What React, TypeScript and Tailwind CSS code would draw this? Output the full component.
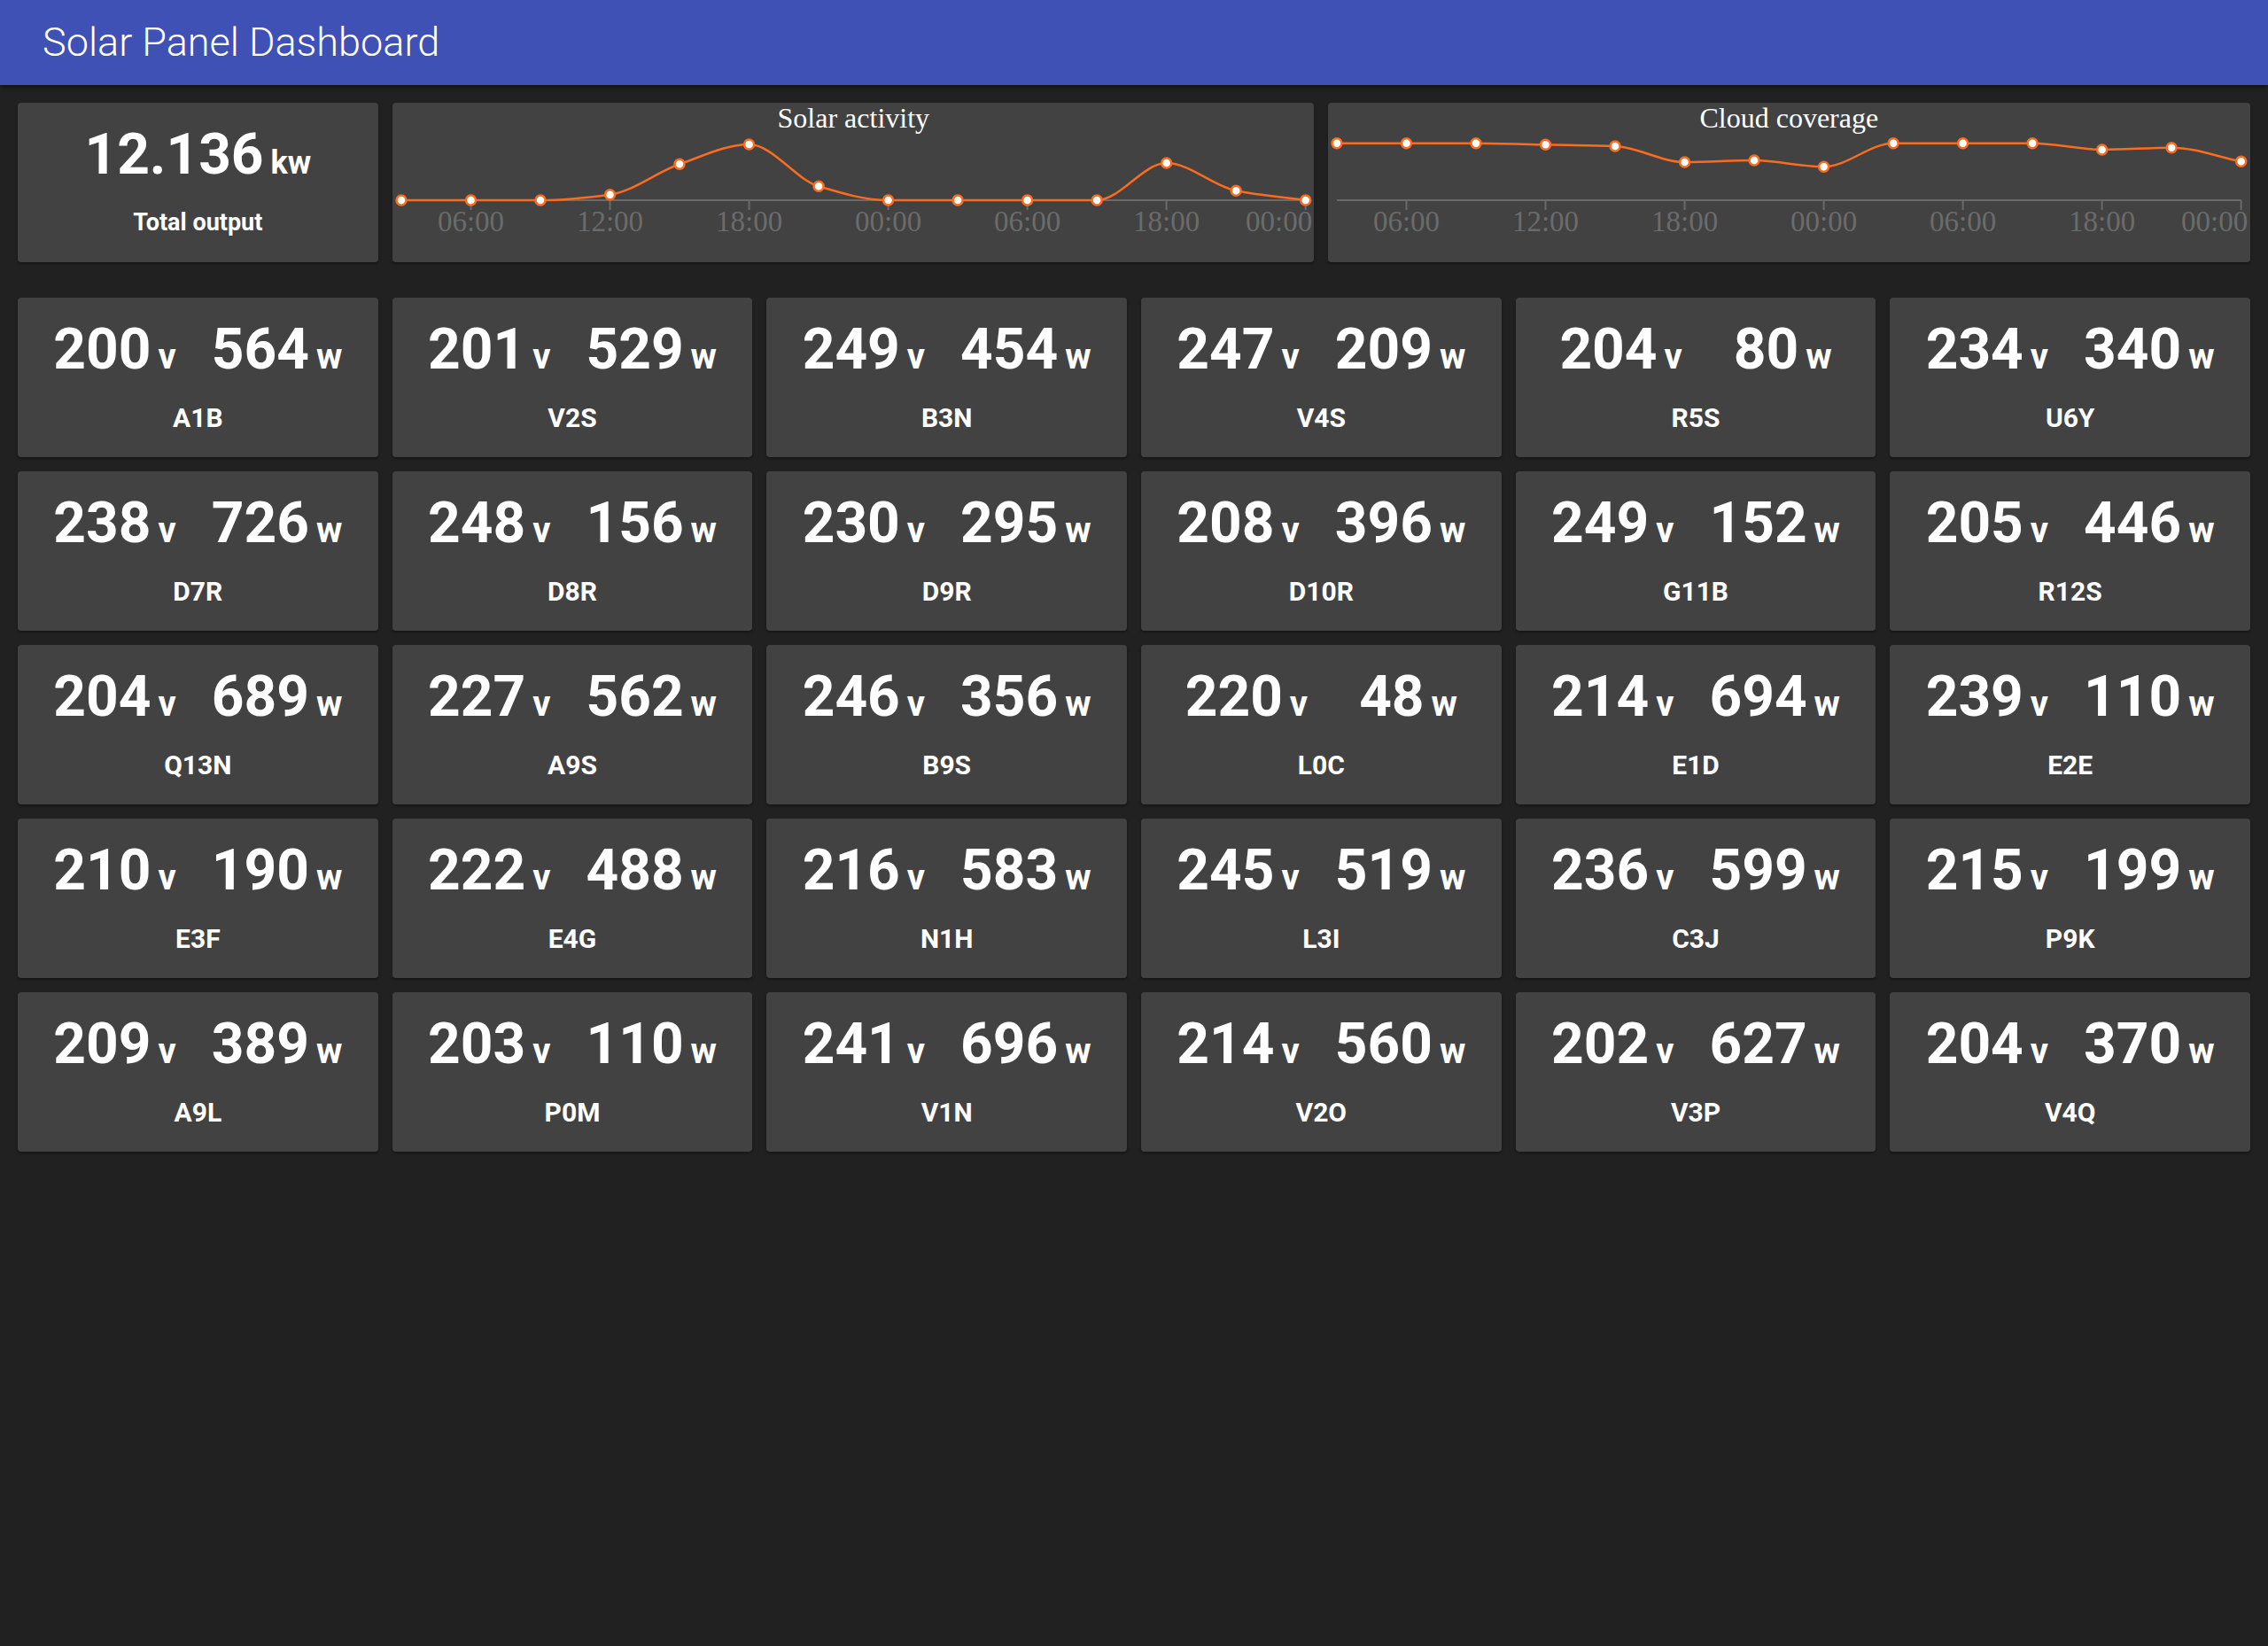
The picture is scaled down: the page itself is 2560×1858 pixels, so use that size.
const panels = [
    { v: 200, w: 564, name: 'A1B' },
    { v: 201, w: 529, name: 'V2S' },
    { v: 249, w: 454, name: 'B3N' },
    { v: 247, w: 209, name: 'V4S' },
    { v: 204, w: 80, name: 'R5S' },
    { v: 234, w: 340, name: 'U6Y' },
    { v: 238, w: 726, name: 'D7R' },
    { v: 248, w: 156, name: 'D8R' },
    { v: 230, w: 295, name: 'D9R' },
    { v: 208, w: 396, name: 'D10R' },
    { v: 249, w: 152, name: 'G11B' },
    { v: 205, w: 446, name: 'R12S' },
    { v: 204, w: 689, name: 'Q13N' },
    { v: 227, w: 562, name: 'A9S' },
    { v: 246, w: 356, name: 'B9S' },
    { v: 220, w: 48, name: 'L0C' },
    { v: 214, w: 694, name: 'E1D' },
    { v: 239, w: 110, name: 'E2E' },
    { v: 210, w: 190, name: 'E3F' },
    { v: 222, w: 488, name: 'E4G' },
    { v: 216, w: 583, name: 'N1H' },
    { v: 245, w: 519, name: 'L3I' },
    { v: 236, w: 599, name: 'C3J' },
    { v: 215, w: 199, name: 'P9K' },
    { v: 209, w: 389, name: 'A9L' },
    { v: 203, w: 110, name: 'P0M' },
    { v: 241, w: 696, name: 'V1N' },
    { v: 214, w: 560, name: 'V2O' },
    { v: 202, w: 627, name: 'V3P' },
    { v: 204, w: 370, name: 'V4Q' },
];

// y positions in chart px (axis at 110)
const solar = [110, 110, 110, 103.7, 69.3, 47, 94.3, 110, 110, 110, 110, 68, 99.3, 110];
const cloud = [45.7, 45.7, 45.7, 47.3, 49, 67, 65, 72.3, 45.7, 45.7, 45.7, 53, 50.7, 66.3];
const ticks = ['06:00', '12:00', '18:00', '00:00', '06:00', '18:00', '00:00'];

const W = 1040.67;
const xs = Array.from({ length: 14 }, (_, i) => 10 + (i * (W - 20)) / 13);

// monotone cubic, like d3.curveMonotoneX
function monotone(pts: number[][]) {
    const n = pts.length;
    const dx: number[] = [];
    const m: number[] = [];
    for (let i = 0; i < n - 1; i++) {
        dx[i] = pts[i + 1][0] - pts[i][0];
        m[i] = (pts[i + 1][1] - pts[i][1]) / dx[i];
    }
    const t: number[] = [];
    t[0] = m[0];
    t[n - 1] = m[n - 2];
    for (let i = 1; i < n - 1; i++) {
        if (m[i - 1] * m[i] <= 0) t[i] = 0;
        else t[i] = (3 * (dx[i - 1] + dx[i])) / ((2 * dx[i] + dx[i - 1]) / m[i - 1] + (dx[i] + 2 * dx[i - 1]) / m[i]);
    }
    let d = `M${pts[0][0]},${pts[0][1]}`;
    for (let i = 0; i < n - 1; i++) {
        const h = dx[i] / 3;
        d += ` C${pts[i][0] + h},${pts[i][1] + t[i] * h} ${pts[i + 1][0] - h},${pts[i + 1][1] - t[i + 1] * h} ${pts[i + 1][0]},${pts[i + 1][1]}`;
    }
    return d;
}

const Chart = ({ title, ys }: { title: string; ys: number[] }) => {
    const pts = xs.map((x, i) => [x, ys[i]]);
    return (
        <div className="col-span-5 h-[180px] overflow-hidden rounded-[4px] bg-[#424242] shadow-[0_2px_3px_rgba(0,0,0,0.35)]">
            <svg viewBox={`0 0 ${W} 180`} className="block h-full w-full">
                <text x={W / 2} y={28} textAnchor="middle" fill="#ffffff" fontSize={32} fontFamily="'Liberation Serif', serif">
                    {title}
                </text>
                <line x1={10} x2={W - 10} y1={110} y2={110} stroke="#6a6a6a" strokeWidth={2} />
                {ticks.map((label, k) => {
                    const x = xs[k * 2 + 1];
                    const last = k === ticks.length - 1;
                    return (
                        <g key={k}>
                            <line x1={x} x2={x} y1={110} y2={121} stroke="#6a6a6a" strokeWidth={2} />
                            <text
                                x={last ? W - 2.5 : x}
                                y={145}
                                textAnchor={last ? 'end' : 'middle'}
                                fill="#6b6b6b"
                                fontSize={33}
                                fontFamily="'Liberation Serif', serif"
                            >
                                {label}
                            </text>
                        </g>
                    );
                })}
                <path d={monotone(pts)} fill="none" stroke="#fb6c1e" strokeWidth={2.5} />
                {pts.map((p, i) => (
                    <circle key={i} cx={p[0]} cy={p[1]} r={5.5} fill="#ffffff" stroke="#fb6c1e" strokeWidth={2.5} />
                ))}
            </svg>
        </div>
    );
};

const PanelCard = ({ v, w, name }: { v: number; w: number; name: string }) => (
    <div className="h-[180px] rounded-[4px] bg-[#424242] pt-[27px] text-white shadow-[0_2px_3px_rgba(0,0,0,0.35)]">
        <div className="flex h-[64px] items-baseline justify-center text-[64px] leading-[64px] font-bold">
            <span>{v}</span>
            <span className="ml-2 text-[40px] leading-[40px]">v</span>
            <span className={w < 100 ? 'ml-[58px]' : 'ml-[40px]'}>{w}</span>
            <span className="ml-2 text-[40px] leading-[40px]">w</span>
        </div>
        <div className="mt-[30px] text-center text-[30px] leading-[30px] font-bold">{name}</div>
    </div>
);

const App = () => {
    return (
        <div className="min-h-screen bg-[#212121] font-['Roboto',sans-serif]">
            <header className="relative z-10 h-[96px] bg-[#3f51b5] pl-[48px] text-[45px] leading-[96px] font-light text-white shadow-[0_2px_5px_rgba(0,0,0,0.5)]">
                Solar Panel Dashboard
            </header>
            <main className="p-[20px]">
                {/* top row */}
                <div className="grid grid-cols-12 gap-4">
                    <div className="col-span-2 h-[180px] rounded-[4px] bg-[#424242] pt-[27px] text-white shadow-[0_2px_3px_rgba(0,0,0,0.35)]">
                        <div className="flex h-[64px] items-baseline justify-center text-[64px] leading-[64px] font-bold">
                            <span>12.136</span>
                            <span className="ml-2 text-[36px] leading-[36px]">kw</span>
                        </div>
                        <div className="mt-[31px] text-center text-[27px] leading-[27px] font-bold">Total output</div>
                    </div>
                    <Chart title="Solar activity" ys={solar} />
                    <Chart title="Cloud coverage" ys={cloud} />
                </div>

                {/* panels */}
                <div className="mt-10 grid grid-cols-6 gap-4">
                    {panels.map((p) => (
                        <PanelCard key={p.name} {...p} />
                    ))}
                </div>
            </main>
        </div>
    );
};

export default App;
